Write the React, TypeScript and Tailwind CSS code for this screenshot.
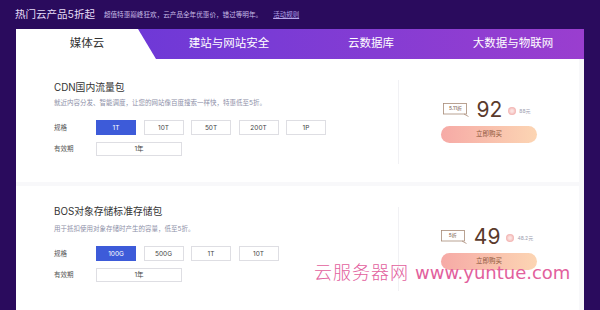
import React from "react";

const FONT = "font-['Inter','Noto_Sans_CJK_SC',sans-serif]";

function Badge({ text }: { text: string }) {
  return (
    <div className="relative w-[27px] h-[14px]">
      <svg width="27" height="14" viewBox="0 0 27 14" className="absolute inset-0">
        <rect x="0.5" y="0.5" width="23" height="10.5" fill="white" stroke="#a98c78" strokeWidth="0.8" />
        <path d="M21 11 L25.5 13.5" stroke="#a98c78" strokeWidth="0.8" fill="none" />
      </svg>
      <div className="absolute left-0 top-0 w-[24px] h-[11.5px] flex items-center justify-center text-[5px] text-[#7a5a48] leading-none">
        {text}
      </div>
    </div>
  );
}

function SpecButton({ label, active }: { label: string; active?: boolean }) {
  return (
    <div
      className={
        active
          ? "w-[40px] h-[15px] flex items-center justify-center bg-[#3d5bd9] border border-[#3d5bd9] text-white text-[6.5px] leading-none"
          : "w-[40px] h-[15px] flex items-center justify-center bg-white border border-[#dedee3] text-[#444] text-[6.5px] leading-none"
      }
    >
      {label}
    </div>
  );
}

function Section({
  title,
  desc,
  specs,
  discount,
  price,
  orig,
  pt,
  descMt,
  heightClass,
}: {
  title: string;
  desc: string;
  specs: string[];
  discount: string;
  price: string;
  orig: string;
  pt: string;
  descMt: string;
  heightClass: string;
}) {
  return (
    <div className={`flex bg-white ${heightClass}`}>
      <div className={`w-[382px] pl-[38px] ${pt}`}>
        <div className="text-[9.8px] leading-none text-[#333]">{title}</div>
        <div className={`${descMt} text-[6.5px] leading-none text-[#8e90a8]`}>{desc}</div>
        <div className="mt-[14px] flex items-center">
          <div className="w-[42px] text-[6.5px] text-[#555] leading-none">规格</div>
          <div className="flex gap-[7.5px]">
            {specs.map((s, i) => (
              <SpecButton key={s} label={s} active={i === 0} />
            ))}
          </div>
        </div>
        <div className="mt-[7px] flex items-center">
          <div className="w-[42px] text-[6.5px] text-[#555] leading-none">有效期</div>
          <div className="w-[86px] h-[14px] flex items-center justify-center bg-white border border-[#dedee3] text-[#444] text-[6.5px] leading-none">
            1年
          </div>
        </div>
      </div>
      <div className="flex flex-col">
        <div className="mt-[21px] w-px h-[84px] bg-[#f1f1f4]" />
      </div>
      <div className="flex-1 flex flex-col items-center pt-[40px]">
        <div className="flex items-center ml-[-4px]">
          <Badge text={discount} />
          <div className="ml-[6px] text-[21px] leading-none text-[#5a3a2c] font-['Inter',sans-serif]">{price}</div>
          <div className="ml-[6px] mt-[3px] w-[8px] h-[8px] rounded-full bg-[radial-gradient(circle,#fbe2e0_20%,#f1adab_75%)]" />
          <div className="ml-[3px] mt-[3px] text-[5px] text-[#a0a0b0] leading-none">{orig}</div>
        </div>
        <div className="mt-[6px] w-[96px] h-[17px] rounded-full bg-[linear-gradient(90deg,#f6aaa6,#fcd5b3)] flex items-center justify-center text-[6.5px] text-[#8b5638] leading-none">
          立即购买
        </div>
      </div>
    </div>
  );
}

export default function App() {
  return (
    <div className={`relative w-[600px] h-[310px] overflow-hidden bg-[#2a0b5d] ${FONT}`}>
      <div className="h-[29px] pl-[15px] pt-[2px] flex items-center">
        <div className="text-[10.5px] leading-none text-[#e6ddf6]">热门云产品5折起</div>
        <div className="ml-[9px] text-[6.6px] leading-none text-[#c7bbe6]">超值特惠巅峰狂欢，云产品全年优惠价，错过等明年。</div>
        <div className="ml-[11px] text-[6.5px] leading-none text-[#b6a6ea] underline">活动规则</div>
      </div>
      <div className="ml-[16px] w-[568px]">
        <div className="h-[30px] flex bg-[linear-gradient(90deg,#6436d8,#7a3bd5_45%,#9a3ecf)]">
          <div className="w-[142px] h-full bg-white flex items-center justify-center [clip-path:polygon(0_0,122px_0,140px_100%,0_100%)]">
            <span className="text-[11.5px] text-[#333] leading-none">媒体云</span>
          </div>
          <div className="w-[142px] h-full flex items-center justify-center text-[11.5px] text-white leading-none">建站与网站安全</div>
          <div className="w-[142px] h-full flex items-center justify-center text-[11.5px] text-white leading-none">云数据库</div>
          <div className="w-[142px] h-full flex items-center justify-center text-[11.5px] text-white leading-none">大数据与物联网</div>
        </div>
        <div className="bg-[#f8f8fa] pr-[5px]">
          <Section
            title="CDN国内流量包"
            desc="就近内容分发、智能调度，让您的网站像百度搜索一样快，特惠低至5折。"
            specs={["1T", "10T", "50T", "200T", "1P"]}
            discount="5.11折"
            price="92"
            orig="88元"
            pt="pt-[24px]"
            descMt="mt-[7px]"
            heightClass="h-[123px]"
          />
          <div className="h-[4px]" />
          <Section
            title="BOS对象存储标准存储包"
            desc="用于抵扣使用对象存储时产生的容量，低至5折。"
            specs={["100G", "500G", "1T", "10T"]}
            discount="5折"
            price="49"
            orig="48.2元"
            pt="pt-[21px]"
            descMt="mt-[9px]"
            heightClass="h-[130px]"
          />
        </div>
      </div>
      <div className="absolute left-[314px] top-[262px] flex items-baseline text-[#e2609d] leading-none pointer-events-none">
        <span className="text-[18px] font-light tracking-[1px] font-['Noto_Sans_CJK_SC',sans-serif]">云服务器网</span>
        <span className="ml-[6px] text-[18px] font-['DejaVu_Sans',sans-serif]">www.yuntue.com</span>
      </div>
    </div>
  );
}
